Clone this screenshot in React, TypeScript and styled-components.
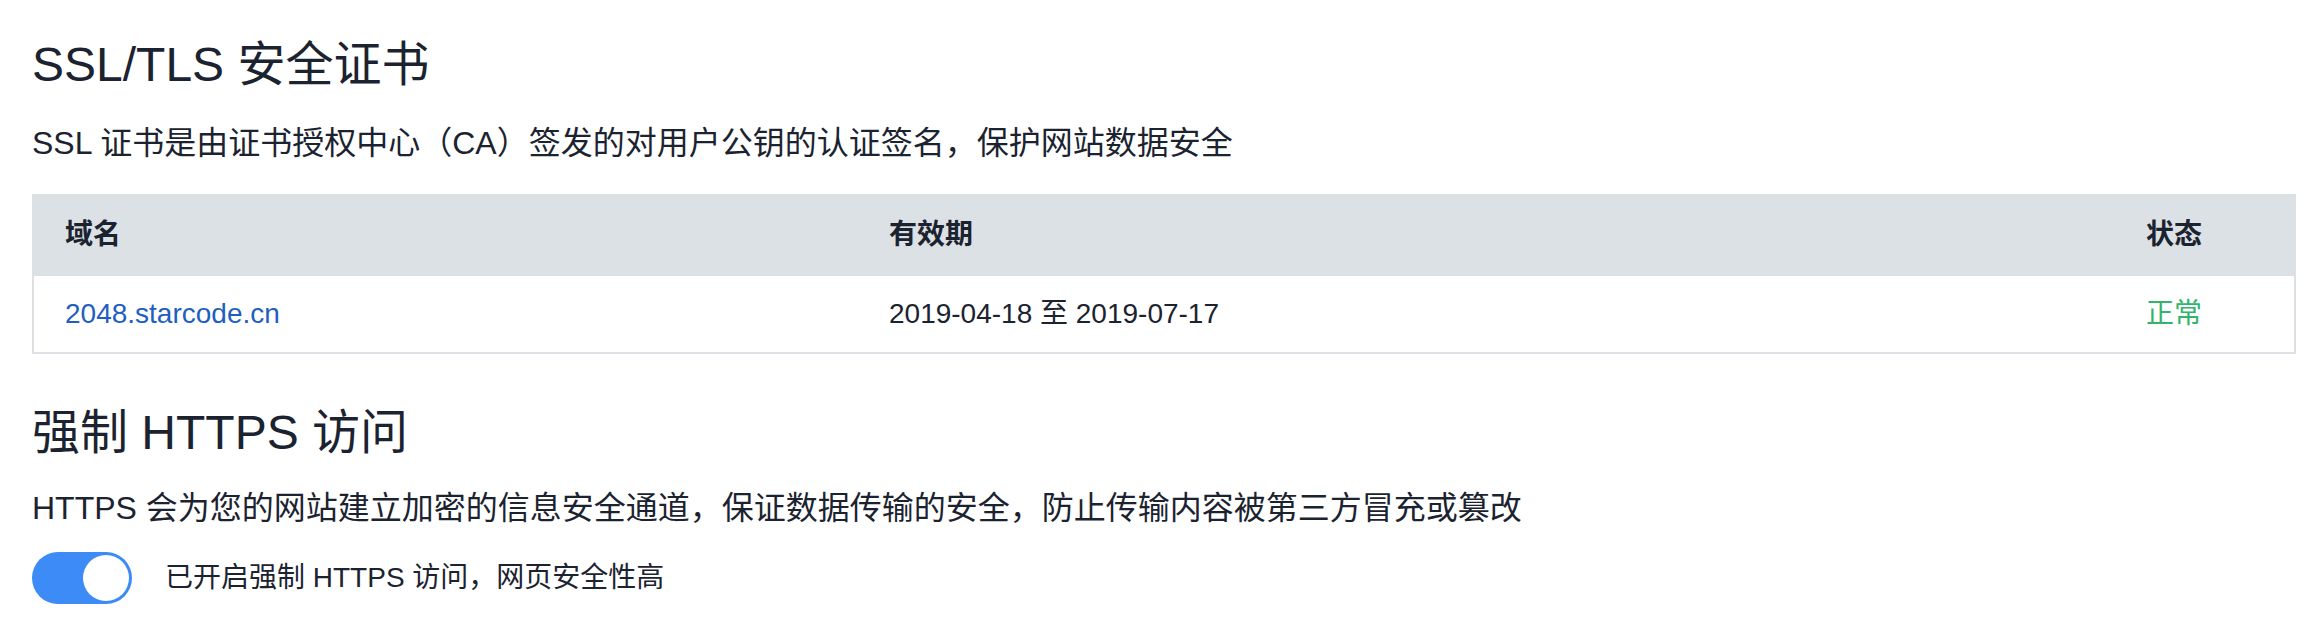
import { useState } from "react";
import styled, { createGlobalStyle } from "styled-components";

const GlobalStyle = createGlobalStyle`
    body {
        margin: 0;
        background: #ffffff;
        font-family: "Helvetica Neue", "Liberation Sans", "Noto Sans CJK SC", sans-serif;
        color: #1c2330;
    }
`;

const Page = styled.div`
    padding: 35px 22px 0 32px;
`;

const Title = styled.h2`
    margin: 0;
    font-size: 48px;
    line-height: 60px;
    font-weight: 400;
    color: #1c2330;
`;

const Desc = styled.p`
    margin: 26px 0 0;
    font-size: 32px;
    line-height: 44px;
    color: #1c2330;
`;

const Table = styled.div`
    margin-top: 29px;
    border: 2px solid #dcdfe3;
    border-top: none;
`;

const Row = styled.div<{ $head?: boolean }>`
    display: grid;
    grid-template-columns: 824px 1fr 179px;
    align-items: center;
    height: ${p => (p.$head ? "82px" : "76px")};
    background: ${p => (p.$head ? "#dce1e6" : "#ffffff")};
    margin: ${p => (p.$head ? "0 -2px" : "0")};
    padding: ${p => (p.$head ? "0 2px" : "0")};
`;

const Cell = styled.div<{ $head?: boolean; $color?: string }>`
    padding-left: 31px;
    font-size: 28px;
    line-height: 40px;
    font-weight: ${p => (p.$head ? 700 : 400)};
    color: ${p => p.$color || "#1c2330"};
    white-space: nowrap;
`;

const SecondTitle = styled(Title)`
    margin-top: 49px;
`;

const SecondDesc = styled(Desc)`
    margin-top: 23px;
`;

const SwitchRow = styled.div`
    display: flex;
    align-items: center;
    gap: 33px;
    margin-top: 22px;
`;

const Switch = styled.button<{ $on: boolean }>`
    position: relative;
    width: 100px;
    height: 52px;
    padding: 0;
    border: none;
    border-radius: 26px;
    background: ${p => (p.$on ? "#3d8bf7" : "#c5c8ce")};
    cursor: pointer;
    flex-shrink: 0;
`;

const Knob = styled.span<{ $on: boolean }>`
    position: absolute;
    top: 3px;
    left: ${p => (p.$on ? "51px" : "3px")};
    width: 46px;
    height: 46px;
    border-radius: 50%;
    background: #ffffff;
    transition: left 0.2s;
`;

const SwitchLabel = styled.span`
    font-size: 28px;
    line-height: 40px;
    color: #1c2330;
`;

export default function App() {
    const [on, setOn] = useState(true);

    return (
        <Page>
            <GlobalStyle />
            <Title>SSL/TLS 安全证书</Title>
            <Desc>SSL 证书是由证书授权中心（CA）签发的对用户公钥的认证签名，保护网站数据安全</Desc>

            <Table>
                <Row $head>
                    <Cell $head>域名</Cell>
                    <Cell $head>有效期</Cell>
                    <Cell $head>状态</Cell>
                </Row>
                <Row>
                    <Cell $color="#1f5fbf">2048.starcode.cn</Cell>
                    <Cell>2019-04-18 至 2019-07-17</Cell>
                    <Cell $color="#32b46b">正常</Cell>
                </Row>
            </Table>

            <SecondTitle>强制 HTTPS 访问</SecondTitle>
            <SecondDesc>HTTPS 会为您的网站建立加密的信息安全通道，保证数据传输的安全，防止传输内容被第三方冒充或篡改</SecondDesc>

            <SwitchRow>
                <Switch $on={on} onClick={() => setOn(!on)}>
                    <Knob $on={on} />
                </Switch>
                <SwitchLabel>{on ? "已开启强制 HTTPS 访问，网页安全性高" : "未开启强制 HTTPS 访问"}</SwitchLabel>
            </SwitchRow>
        </Page>
    );
}
